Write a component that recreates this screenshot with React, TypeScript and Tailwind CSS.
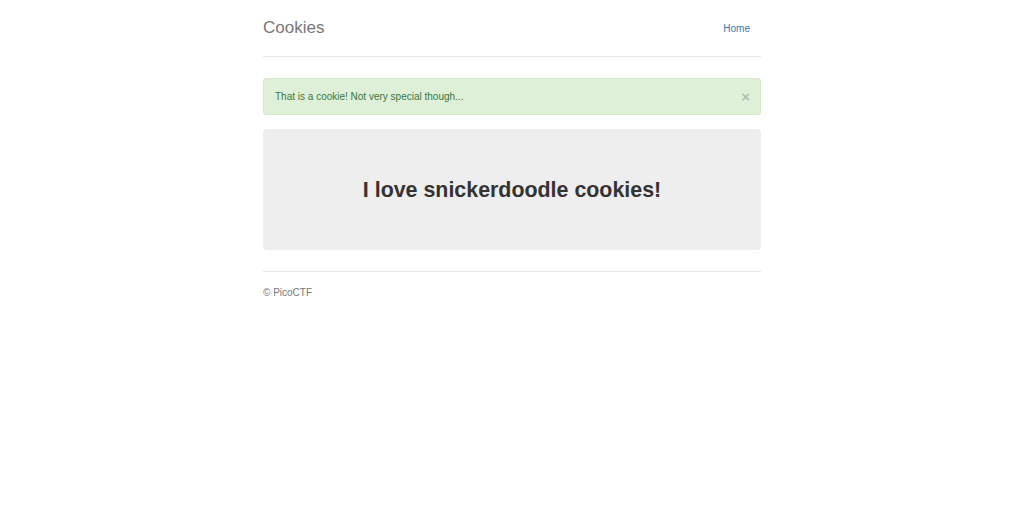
export default function App() {
  return (
    <div className="min-h-[516px] w-full bg-white font-['Liberation_Sans',Arial,sans-serif] text-[#333]">
      <div className="mx-auto w-[498px] pt-[14px]">
        {/* header */}
        <div className="flex items-center justify-between border-b border-[#e5e5e5] pb-[14px]">
          <h3 className="text-[17px] leading-[28px] text-[#777]">Cookies</h3>
          <nav>
            <a href="#" className="block px-[11px] pb-[6px] pt-[8px] text-[10px] leading-[14px] text-[#337ab7]">
              Home
            </a>
          </nav>
        </div>

        {/* alert */}
        <div className="mt-[21px] flex h-[37px] items-center justify-between rounded-[3px] border border-[#d6e9c6] bg-[#dff0d8] pl-[11px] pr-[10px] text-[10px] text-[#3c763d]">
          <span>That is a cookie! Not very special though...</span>
          <button className="text-[15px] font-bold leading-none text-black opacity-20">×</button>
        </div>

        {/* jumbotron */}
        <div className="mt-[14px] flex h-[121px] items-center justify-center rounded-[4px] bg-[#eeeeee] pt-[2px]">
          <h1 className="text-[21.4px] font-bold text-[#333]">I love snickerdoodle cookies!</h1>
        </div>

        {/* footer */}
        <footer className="mt-[21px] border-t border-[#e5e5e5] pt-[14px]">
          <p className="text-[10px] leading-[14px] text-[#777]">© PicoCTF</p>
        </footer>
      </div>
    </div>
  );
}
